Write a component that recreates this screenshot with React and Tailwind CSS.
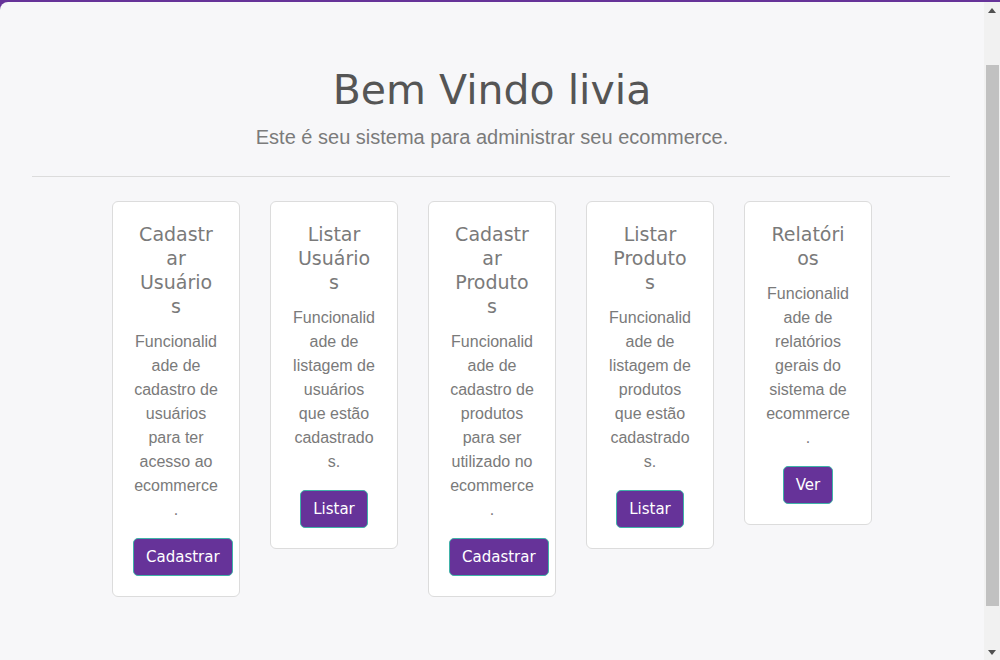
import React from 'react'

const cards = [
  {
    title: ['Cadastr', 'ar', 'Usuário', 's'],
    text: ['Funcionalid', 'ade de', 'cadastro de', 'usuários', 'para ter', 'acesso ao', 'ecommerce', '.'],
    action: 'Cadastrar',
  },
  {
    title: ['Listar', 'Usuário', 's'],
    text: ['Funcionalid', 'ade de', 'listagem de', 'usuários', 'que estão', 'cadastrado', 's.'],
    action: 'Listar',
  },
  {
    title: ['Cadastr', 'ar', 'Produto', 's'],
    text: ['Funcionalid', 'ade de', 'cadastro de', 'produtos', 'para ser', 'utilizado no', 'ecommerce', '.'],
    action: 'Cadastrar',
  },
  {
    title: ['Listar', 'Produto', 's'],
    text: ['Funcionalid', 'ade de', 'listagem de', 'produtos', 'que estão', 'cadastrado', 's.'],
    action: 'Listar',
  },
  {
    title: ['Relatóri', 'os'],
    text: ['Funcionalid', 'ade de', 'relatórios', 'gerais do', 'sistema de', 'ecommerce', '.'],
    action: 'Ver',
  },
]

const heading = { fontFamily: '"DejaVu Sans", "Open Sans", sans-serif' }
const body = { fontFamily: '"Liberation Sans", Arial, sans-serif' }

const Card = ({ card }) => (
  <div className="w-[128px] bg-white border border-[#dcdcdc] rounded-md px-5 pt-5 pb-5 text-center">
    <h5 className="text-[19px] leading-[24px] text-[#7a7a7a] mb-3 whitespace-nowrap" style={heading}>
      {card.title.map((l, i) => <span key={i} className="block">{l}</span>)}
    </h5>
    <p className="text-[16px] leading-[24px] text-[#7a7a7a] mb-4 whitespace-nowrap" style={body}>
      {card.text.map((l, i) => <span key={i} className="block">{l}</span>)}
    </p>
    <div className="text-center whitespace-nowrap">
      <button className="inline-block h-[38px] px-3 rounded-[5px] bg-[#663399] border border-[#3fb2a8] text-white text-[15px]" style={heading}>
        {card.action}
      </button>
    </div>
  </div>
)

const Scrollbar = () => (
  <div className="w-4 bg-[#f1f1f1] flex flex-col items-center">
    <div className="h-4 flex items-center justify-center">
      <svg width="8" height="5" viewBox="0 0 8 5"><path d="M0 5 L4 0 L8 5 Z" fill="#505050" /></svg>
    </div>
    <div className="h-[47px]" />
    <div className="w-[13px] h-[541px] bg-[#c1c1c1]" />
    <div className="flex-1" />
    <div className="h-4 flex items-center justify-center">
      <svg width="8" height="5" viewBox="0 0 8 5"><path d="M0 0 L8 0 L4 5 Z" fill="#505050" /></svg>
    </div>
  </div>
)

export default function App() {
  return (
    <div className="w-[1000px] h-[660px] bg-[#663399] pt-[2px] overflow-hidden">
      <div className="flex h-[658px]">
        <main className="flex-1 bg-[#f7f7f9] rounded-tl-[8px] pt-[64px]">
          <h1 className="text-center text-[41px] leading-[48px] text-[#555555]" style={heading}>Bem Vindo livia</h1>
          <p className="text-center text-[20px] leading-[30px] text-[#7b7b7b] mt-[8px]" style={body}>
            Este é seu sistema para administrar seu ecommerce.
          </p>
          <hr className="ml-8 mr-[34px] mt-[24px] border-t border-[#dcdcdc]" />
          <div className="flex justify-center items-start gap-[30px] mt-6">
            {cards.map((c, i) => <Card key={i} card={c} />)}
          </div>
        </main>
        <Scrollbar />
      </div>
    </div>
  )
}
